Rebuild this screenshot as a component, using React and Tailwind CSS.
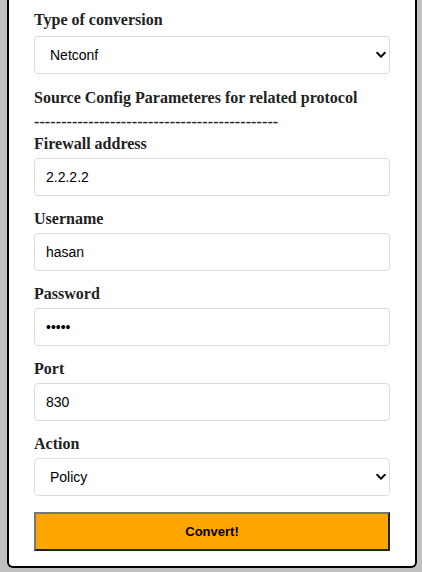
import { useState } from "react";

const labelCls = "block text-[16px] leading-[18px] font-bold text-[#222] [font-family:'Liberation_Serif',serif]";
const fieldCls =
    "block w-full h-[38px] px-[11px] border border-[#dcdcdc] rounded-[4px] bg-white text-[14px] text-black [font-family:'Liberation_Sans',Arial,sans-serif] outline-none";

function Chevron() {
    return (
        <svg className="absolute right-[4px] top-1/2 -translate-y-1/2 pointer-events-none" width="10" height="7" viewBox="0 0 10 7" fill="none">
            <path d="M1.2 1.3 L5 5.2 L8.8 1.3" stroke="#111" strokeWidth="2" strokeLinecap="round" strokeLinejoin="round" />
        </svg>
    );
}

function Select({ value, onChange, options }) {
    return (
        <div className="relative">
            <select value={value} onChange={(e) => onChange(e.target.value)} className={fieldCls + " appearance-none pl-[15px]"}>
                {options.map((o) => (
                    <option key={o}>{o}</option>
                ))}
            </select>
            <Chevron />
        </div>
    );
}

export default function App() {
    const [type, setType] = useState("Netconf");
    const [address, setAddress] = useState("2.2.2.2");
    const [username, setUsername] = useState("hasan");
    const [password, setPassword] = useState("12345");
    const [port, setPort] = useState("830");
    const [action, setAction] = useState("Policy");

    return (
        <div className="min-h-screen bg-[#c0c0c0] pb-[4px]">
            <form
                onSubmit={(e) => e.preventDefault()}
                className="ml-[7px] w-[410px] bg-white border-x-2 border-b-2 border-black rounded-b-[6px] px-[25px] pt-[11px] pb-[15px]"
            >
                {/* Conversion type */}
                <label className={labelCls + " mb-[7px]"}>Type of conversion</label>
                <Select value={type} onChange={setType} options={["Netconf", "SSH", "REST API"]} />

                <div className={labelCls + " mt-[15px] mb-[6px]"}>Source Config Parameteres for related protocol</div>
                <div className={labelCls + " mb-[4px] tracking-[0.1px]"}>---------------------------------------------</div>

                <label className={labelCls + " mb-[5px]"}>Firewall address</label>
                <input className={fieldCls} value={address} onChange={(e) => setAddress(e.target.value)} />

                <label className={labelCls + " mt-[14px] mb-[5px]"}>Username</label>
                <input className={fieldCls} value={username} onChange={(e) => setUsername(e.target.value)} />

                <label className={labelCls + " mt-[14px] mb-[5px]"}>Password</label>
                <input type="password" className={fieldCls} value={password} onChange={(e) => setPassword(e.target.value)} />

                <label className={labelCls + " mt-[14px] mb-[5px]"}>Port</label>
                <input className={fieldCls} value={port} onChange={(e) => setPort(e.target.value)} />

                <label className={labelCls + " mt-[14px] mb-[5px]"}>Action</label>
                <Select value={action} onChange={setAction} options={["Policy", "Address", "Service"]} />

                <button
                    type="submit"
                    className="mt-[16px] block w-full h-[39px] bg-[#ffa500] border-2 border-t-[#767676] border-l-[#767676] border-r-[#222] border-b-[#222] text-[13px] font-bold text-black [font-family:'Liberation_Sans',Arial,sans-serif]"
                >
                    Convert!
                </button>
            </form>
        </div>
    );
}
